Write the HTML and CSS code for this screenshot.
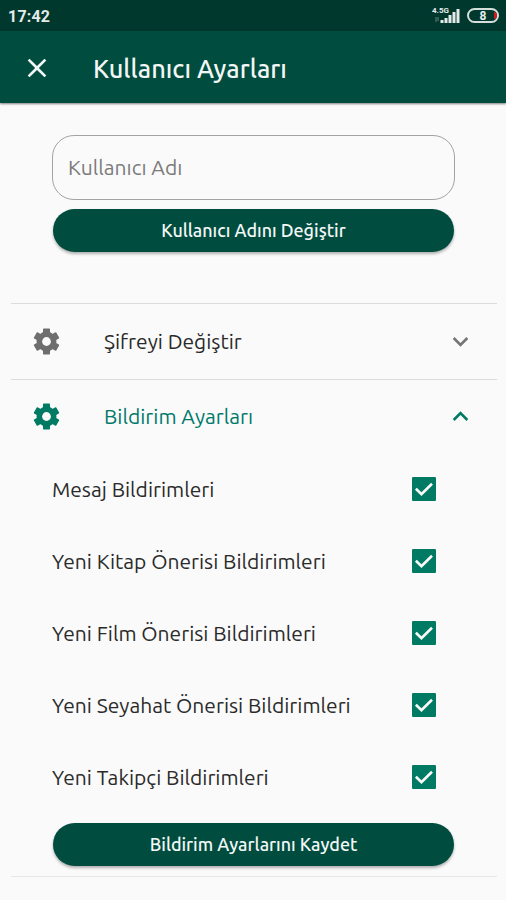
FILE: index.html
```html
<!DOCTYPE html>
<html lang="tr">
<head>
    <meta charset="UTF-8">
    <meta name="viewport" content="width=device-width, initial-scale=1.0">
    <link rel="stylesheet" href="styles.css">
    <title>Kullanıcı Ayarları</title>
</head>
<body>
    <svg class="defs">
        <symbol id="gear" viewBox="0 0 24 24">
            <circle cx="12" cy="12" r="7.7"/>
            <rect id="tooth" x="9.3" y="2" width="5.4" height="20" rx="0.5"/>
            <use href="#tooth" transform="rotate(60 12 12)"/>
            <use href="#tooth" transform="rotate(120 12 12)"/>
            <circle class="hole" cx="12" cy="12" r="3.4"/>
        </symbol>
        <symbol id="check" viewBox="0 0 24 24">
            <path d="M20 3H4c-.6 0-1 .4-1 1v16c0 .6.4 1 1 1h16c.6 0 1-.4 1-1V4c0-.6-.4-1-1-1z" class="box"/>
            <path d="M5.9 11.8l4.2 4.1 7.9-7.8" class="mark"/>
        </symbol>
    </svg>

    <div class="status">
        <span class="clock">17:42</span>
        <div class="net">
            <span class="net-type">4.5G</span>
            <svg class="signal" viewBox="0 0 28 14">
                <path class="arrows" d="M3.5 8v5M5.5 8v4"/>
                <path d="M8 11h3v3H8zM12 9h3v5h-3zM16 6h3v8h-3zM20 3h3v11h-3zM24 0h3v14h-3z"/>
            </svg>
        </div>
        <div class="battery"><span>8</span><i></i></div>
    </div>

    <header class="bar">
        <svg class="close" viewBox="0 0 24 24"><path d="M19 6.41L17.59 5 12 10.59 6.41 5 5 6.41 10.59 12 5 17.59 6.41 19 12 13.41 17.59 19 19 17.59 13.41 12z"/></svg>
        <h1>Kullanıcı Ayarları</h1>
    </header>

    <form class="user">
        <input type="text" placeholder="Kullanıcı Adı">
        <button type="button" class="btn-user">Kullanıcı Adını Değiştir</button>
    </form>

    <div class="list">
        <section>
            <div class="row">
                <svg class="gear"><use href="#gear"/></svg>
                <span>Şifreyi Değiştir</span>
                <svg class="arrow" viewBox="0 0 24 24"><path d="M16.59 8.59L12 13.17 7.41 8.59 6 10l6 6 6-6z"/></svg>
            </div>
        </section>
        <section>
            <div class="row open">
                <svg class="gear"><use href="#gear"/></svg>
                <span>Bildirim Ayarları</span>
                <svg class="arrow" viewBox="0 0 24 24"><path d="M12 8l-6 6 1.41 1.41L12 10.83l4.59 4.58L18 14z"/></svg>
            </div>
            <ul>
                <li><span>Mesaj Bildirimleri</span><svg><use href="#check"/></svg></li>
                <li><span>Yeni Kitap Önerisi Bildirimleri</span><svg><use href="#check"/></svg></li>
                <li><span>Yeni Film Önerisi Bildirimleri</span><svg><use href="#check"/></svg></li>
                <li><span>Yeni Seyahat Önerisi Bildirimleri</span><svg><use href="#check"/></svg></li>
                <li><span>Yeni Takipçi Bildirimleri</span><svg><use href="#check"/></svg></li>
            </ul>
            <button type="button" class="btn-save">Bildirim Ayarlarını Kaydet</button>
        </section>
    </div>
</body>
</html>
```

FILE: styles.css
```css
*{
    margin:0;
    padding:0;
    box-sizing:border-box;
    font-family:Ubuntu, 'Noto Sans', sans-serif;
}
body{
    height:900px;
    overflow:hidden;
    background:#fafafa;
    color:#2a2a2a;
}
.defs{
    display:none;
}
.status{
    height:31px;
    padding:0 7px 0 8px;

    display:flex;
    align-items:center;

    background:#00382d;
    color:#e4ecea;
}
.clock{
    font-family:Roboto, sans-serif;
    font-size:16px;
    font-weight:bold;
    line-height:20px;
    letter-spacing:0.2px;
    padding-top:2px;
}
.net{
    position:relative;
    margin-left:auto;
    width:28px;
    height:15px;
}
.net-type{
    position:absolute;
    left:0;
    top:-1px;
    font-family:Roboto, sans-serif;
    font-size:8px;
    font-weight:bold;
    line-height:8px;
}
.signal{
    display:block;
    width:29px;
    height:14px;
    margin-top:1px;
    fill:#e4ecea;
}
.signal .arrows{
    fill:none;
    stroke:#5f857c;
}
.battery{
    position:relative;
    width:32px;
    height:15px;
    margin-left:7px;

    display:flex;
    justify-content:center;
    align-items:center;

    border:2px solid #d5dfdc;
    border-radius:8px;
    overflow:hidden;
}
.battery span{
    font-family:Roboto, sans-serif;
    font-size:12px;
    font-weight:bold;
    line-height:11px;
    padding-top:1px;
}
.battery i{
    position:absolute;
    right:0;
    top:2px;
    width:3px;
    height:7px;
    border-radius:0 3px 3px 0;
    background:#d01c1c;
}
.bar{
    height:72px;
    padding:1px 0 0 21px;

    display:flex;
    align-items:center;

    background:#004d3f;
    color:#f2f6f5;
    box-shadow:0 1px 2px rgba(0, 0, 0, 0.5);
}
.close{
    width:32px;
    height:32px;
    fill:#f2f6f5;
}
h1{
    margin-left:40px;
    font-size:25.4px;
    font-weight:500;
    line-height:32px;
    padding-top:2px;
}
.user{
    padding:32px 51px 0 52px;
    height:200px;
}
input{
    display:block;
    width:100%;
    height:65px;
    padding:0 15px 2px;

    background:#fafafa;
    border:1px solid #a3a3a3;
    border-radius:22px;

    font-size:21px;
}
input::placeholder{
    color:#7b7b7b;
}
button{
    display:block;
    height:43px;

    background:#004d3f;
    color:#f4f8f7;
    border:none;
    border-radius:22px;
    box-shadow:0 2px 3px rgba(0, 0, 0, 0.3);

    font-size:17.9px;
    font-weight:500;
    padding-bottom:1px;
}
.btn-user{
    width:401px;
    margin:9px 0 0 1px;
}
.list{
    margin:0 9px 0 11px;
}
section{
    border-top:1px solid #dcdcdc;
}
section:last-child{
    height:498px;
    border-bottom:1px solid #e6e6e6;
}
.row{
    height:75px;
    padding:0 21px 0 20px;

    display:flex;
    align-items:center;

    font-size:21px;
}
.row span{
    margin-left:42px;
    padding-bottom:1px;
}
.gear{
    width:31px;
    height:31px;
    fill:#6e6e6e;
}
.hole{
    fill:#fafafa;
}
.arrow{
    width:31px;
    height:31px;
    margin-left:auto;
    fill:#757575;
}
.open{
    height:72px;
    color:#00796b;
}
.open span{
    padding-bottom:0;
}
.open .gear,
.open .arrow{
    fill:#007a63;
}
ul{
    list-style:none;
    height:361px;
    padding:1px 57px 0 41px;

    display:grid;
    grid-template-rows:repeat(5, 1fr);
}
li{
    display:flex;
    justify-content:space-between;
    align-items:center;

    font-size:21px;
}
li span{
    padding-bottom:1px;
}
li svg{
    width:32px;
    height:32px;
}
.box{
    fill:#007a63;
}
.mark{
    fill:none;
    stroke:#fafafa;
    stroke-width:2;
}
.btn-save{
    width:401px;
    margin:10px 0 0 42px;
}
```
